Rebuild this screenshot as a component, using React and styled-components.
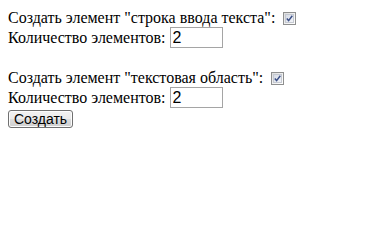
import React from 'react';
import styled, {createGlobalStyle} from 'styled-components';

const GlobalStyle = createGlobalStyle`
    body {
        margin: 8px;
        background: #fff;
        color: #000;
        font-family: "Liberation Serif", "Times New Roman", serif;
        font-size: 16px;
    }
`;

const Form = styled.form`
    display: flex;
    flex-flow: column;
    align-items: flex-start;
`;

const Row = styled.div`
    display: flex;
    align-items: center;
    height: ${props => props.tall ? 21 : 19}px;
    margin-top: ${props => props.gap || 0}px;
    white-space: pre;
`;

const Label = styled.span`
    line-height: 18px;
`;

const Box = styled.span`
    width: 13px;
    height: 13px;
    margin-left: ${props => props.offset}px;
    box-sizing: border-box;
    border: 1px solid #8e8f8f;
    background: linear-gradient(135deg, #dcdcdc 0%, #f4f4f4 60%, #fff 100%);
    display: flex;
    align-items: center;
    justify-content: center;
    padding: 1px;
    position: relative;
    top: 1px;
`;

const Inner = styled.span`
    width: 9px;
    height: 9px;
    box-sizing: border-box;
    border: 1px solid #c5c9d1;
    background: linear-gradient(135deg, #d6dbe6 0%, #f2f4f8 100%);
    display: flex;
    align-items: center;
    justify-content: center;
`;

const NumberInput = styled.input`
    width: 53px;
    height: 21px;
    box-sizing: border-box;
    margin: 0 0 0 4px;
    padding: 1px 2px;
    border: 1px solid #a5a5a5;
    font-family: "Liberation Sans", Arial, sans-serif;
    font-size: 16px;
    color: #000;
    outline: none;
`;

const Button = styled.button`
    margin-top: 2px;
    width: 65px;
    height: 18px;
    padding: 0;
    border: 1px solid #707070;
    border-radius: 3px;
    background: linear-gradient(#f2f2f2 0%, #ebebeb 50%, #dddddd 51%, #cfcfcf 100%);
    box-shadow: inset 0 0 0 1px #fcfcfc;
    font-family: "Liberation Sans", Arial, sans-serif;
    font-size: 14px;
    line-height: 14px;
    color: #000;
`;

const Check = () => (
    <svg width="7" height="7" viewBox="0 0 7 7">
        <path d="M0.8 3.6 L2.6 5.6 L6.3 0.8" fill="none" stroke="#3b4f86" strokeWidth="1.5" />
    </svg>
);

const Checkbox = ({offset}) => (
    <Box offset={offset}>
        <Inner><Check /></Inner>
    </Box>
);

const Block = ({title, offset, gap}) => (
    <>
        <Row gap={gap}>
            <Label>{`Создать элемент "${title}":`}</Label>
            <Checkbox offset={offset} />
        </Row>
        <Row tall>
            <Label>Количество элементов:</Label>
            <NumberInput type="text" defaultValue="2" />
        </Row>
    </>
);

export default function App() {
    return (
        <>
            <GlobalStyle />
            <Form onSubmit={e => e.preventDefault()}>
                <Block title="строка ввода текста" offset={8} />
                <Block title="текстовая область" offset={8} gap={20} />
                <Button type="submit">Создать</Button>
            </Form>
        </>
    );
}
